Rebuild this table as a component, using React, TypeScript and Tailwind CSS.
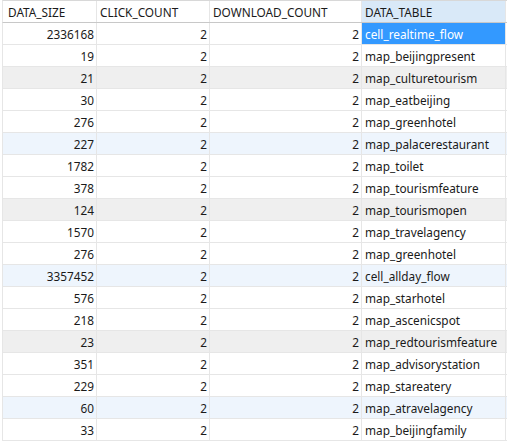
import React from "react";

const rows: [string, string, string, string][] = [
  ["2336168", "2", "2", "cell_realtime_flow"],
  ["19", "2", "2", "map_beijingpresent"],
  ["21", "2", "2", "map_culturetourism"],
  ["30", "2", "2", "map_eatbeijing"],
  ["276", "2", "2", "map_greenhotel"],
  ["227", "2", "2", "map_palacerestaurant"],
  ["1782", "2", "2", "map_toilet"],
  ["378", "2", "2", "map_tourismfeature"],
  ["124", "2", "2", "map_tourismopen"],
  ["1570", "2", "2", "map_travelagency"],
  ["276", "2", "2", "map_greenhotel"],
  ["3357452", "2", "2", "cell_allday_flow"],
  ["576", "2", "2", "map_starhotel"],
  ["218", "2", "2", "map_ascenicspot"],
  ["23", "2", "2", "map_redtourismfeature"],
  ["351", "2", "2", "map_advisorystation"],
  ["229", "2", "2", "map_stareatery"],
  ["60", "2", "2", "map_atravelagency"],
  ["33", "2", "2", "map_beijingfamily"],
];

export default function App() {
  return (
    <div
      className="w-[507px] h-[441px] bg-white overflow-hidden pl-[2px] text-[11.8px] text-[#1a1a1a]"
      style={{ fontFamily: '"Noto Sans", "Microsoft YaHei", sans-serif' }}
    >
      <div className="flex h-[23px] border-t border-b border-t-[#d8d8d8] border-b-[#c8c8c8] border-l border-l-[#e6e6e6] leading-[22px]">
        <div className="w-[94px] shrink-0 border-r border-[#e6e6e6] pl-[5px]">DATA_SIZE</div>
        <div className="w-[113px] shrink-0 border-r border-[#e6e6e6] pl-[3px]">CLICK_COUNT</div>
        <div className="w-[152px] shrink-0 border-r border-[#e6e6e6] pl-[3px]">DOWNLOAD_COUNT</div>
        <div className="w-[144px] shrink-0 border-r border-[#e6e6e6] pl-[3px] bg-[#d9e9f8]">DATA_TABLE</div>
      </div>
      {rows.map((r, i) => {
        const bg = i % 6 === 2 ? "bg-[#efefef]" : i % 6 === 5 ? "bg-[#eef5fd]" : "bg-white";
        return (
          <div
            key={i}
            className={`flex h-[22px] border-b border-[#e6e6e6] border-l leading-[22px] ${bg}`}
          >
            <div className="w-[94px] shrink-0 border-r border-[#e6e6e6] text-right pr-[2px]">{r[0]}</div>
            <div className="w-[113px] shrink-0 border-r border-[#e6e6e6] text-right pr-[2px]">{r[1]}</div>
            <div className="w-[152px] shrink-0 border-r border-[#e6e6e6] text-right pr-[2px]">{r[2]}</div>
            <div
              className={`w-[144px] shrink-0 border-r border-[#e6e6e6] pl-[3px] ${
                i === 0 ? "bg-[#3399ff] text-white" : ""
              }`}
            >
              {r[3]}
            </div>
          </div>
        );
      })}
    </div>
  );
}
